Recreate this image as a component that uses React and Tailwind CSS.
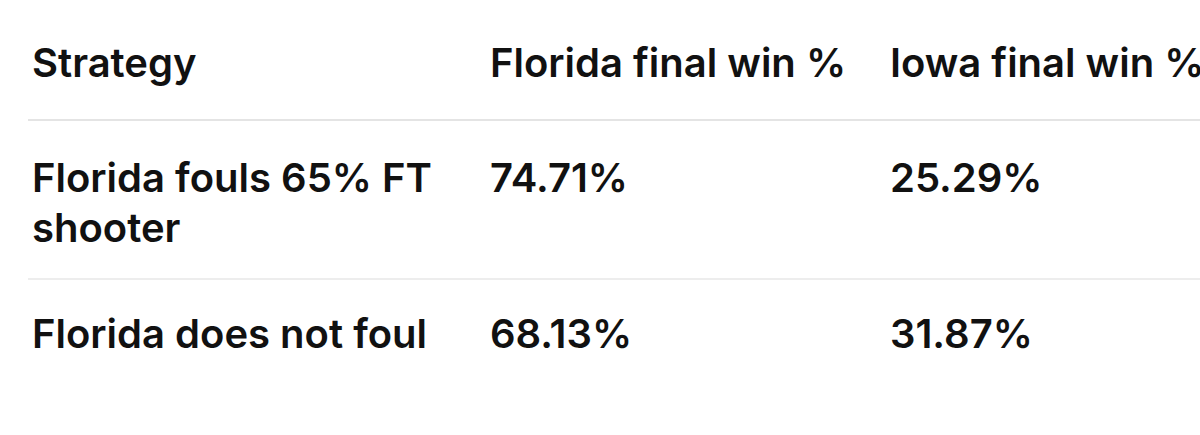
import React from 'react';

const rows = [
  { strategy: 'Florida fouls 65% FT shooter', florida: '74.71%', iowa: '25.29%' },
  { strategy: 'Florida does not foul', florida: '68.13%', iowa: '31.87%' },
];

export default function App() {
  return (
    <div className="w-[1200px] h-[435px] overflow-hidden bg-white pl-[28px] text-[#111] font-['Inter',sans-serif]">
      <div className="grid grid-cols-[458px_400px_1fr] border-b-2 border-[#e4e4e4] pt-[38px] pb-[31px] pl-[4px] text-[40px] font-semibold leading-[50px] whitespace-nowrap">
        <div>Strategy</div>
        <div>Florida final win %</div>
        <div>Iowa final win %</div>
      </div>
      {rows.map((r, i) => (
        <div
          key={i}
          className={`grid grid-cols-[458px_400px_1fr] pl-[4px] text-[40px] font-semibold leading-[50px] ${i === 0 ? 'border-b-2 border-[#ededed] pt-[32px] pb-[25px]' : 'pt-[29px]'}`}
        >
          <div className="pr-[20px]">{r.strategy}</div>
          <div>{r.florida}</div>
          <div>{r.iowa}</div>
        </div>
      ))}
    </div>
  );
}
